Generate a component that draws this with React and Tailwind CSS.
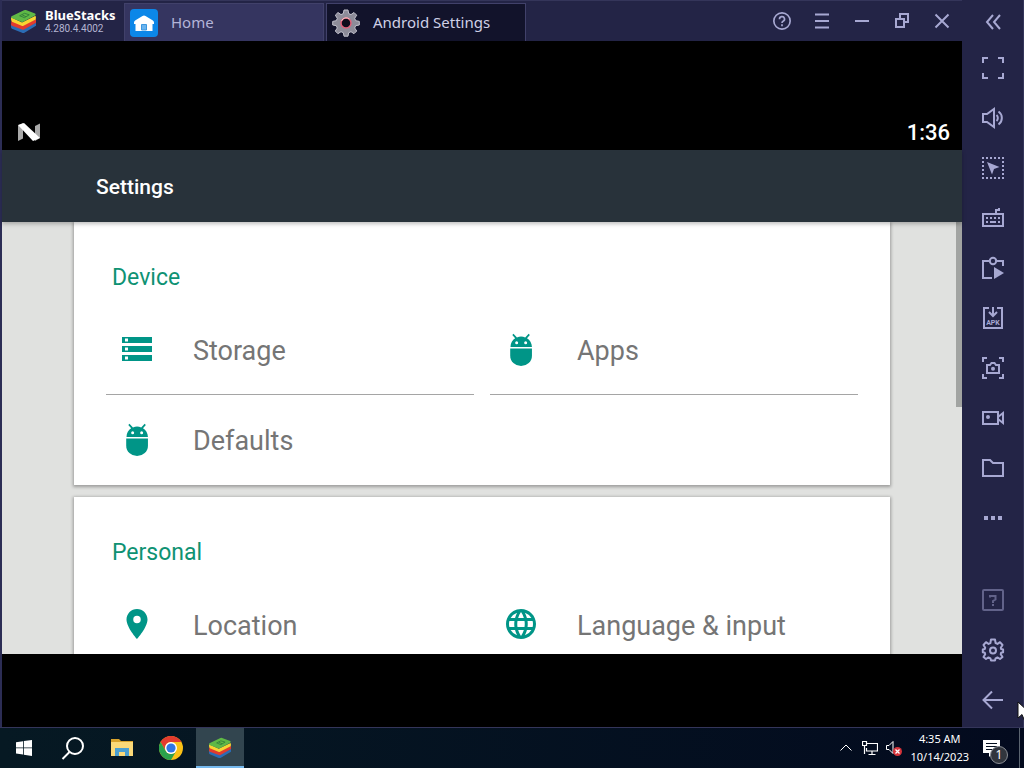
import React, { useState } from 'react'
import { MdStorage, MdLocationOn, MdLanguage } from 'react-icons/md'

const Glyph = ({ children, className = 'h-6 w-6', width = 2 }) => (
  <svg viewBox="0 0 24 24" className={className} fill="none" stroke="currentColor" strokeWidth={width} aria-hidden="true">
    {children}
  </svg>
)

const Logo = ({ className }) => (
  <svg viewBox="0 0 28 26" className={className} aria-hidden="true">
    <path d="M1 15.5 14 20l13-6v3.500L15 24.600q-1.200.6-2.500.1L2 20.500Q1 20 1 18.500Z" fill="#2b6cb4" />
    <path d="M1.500 12 13 17l14-6.500v3.800L14.500 21.300q-1 .4-2 0L2 17.500Q1 17 1 16Z" fill="#e23b2e" />
    <path d="M1 8.500 12.500 14 26.500 7q.8 1.600.2 3.800L14 17.500q-1 .4-2 0L2 13.300Q.8 12.500 1 8.500Z" fill="#f7d532" />
    <path d="M1.500 7.500 14.500 1.200q1-.4 2-.1l9.500 3.700q1.400.8 0 1.900L13.700 13.200q-1 .5-2 0L1.600 9.400Q.5 8.500 1.500 7.500Z" fill="#5fb946" />
    <path d="m10 7 5-2.500 5 1.500-5 3Zm2.500-1 4 2" fill="none" stroke="#33803a" strokeWidth="1" />
  </svg>
)

const HomeIcon = () => (
  <svg viewBox="0 0 28 28" className="h-7 w-7 shrink-0" aria-hidden="true">
    <rect width="28" height="28" rx="4" fill="#0c87e8" />
    <path d="M4 13.500Q4 12 5.500 11.200L12.500 7q1.500-.8 3 0l7 4.200q1.500.8 1.500 2.300V15h-1.500v7h-17v-7H4Z" fill="#fff" />
    <path d="M11.500 21v-5.500h5V21Z" fill="#6bb4ee" stroke="#3c97df" />
  </svg>
)

const GearIcon = () => (
  <svg viewBox="0 0 28 28" className="h-7 w-7 shrink-0" aria-hidden="true">
    <path
      d="M12 1h4l.7 3.600 2.300 1 3-2.100 2.700 2.700-2 3.100 1 2.400L27.300 12.400v3.600l-3.600.7-1 2.300 2 3-2.700 2.700-3-2-2.300 1L16 27.200h-4l-.7-3.500-2.300-1-3.100 2-2.600-2.700 2-3-1-2.300L.7 16v-3.600l3.600-.7 1-2.400-2-3.100L6 3.500l3 2.100 2.300-1Z"
      fill="#8d8c99"
      stroke="#c3c2cd"
      strokeLinejoin="round"
    />
    <circle cx="14" cy="14" r="5" fill="#0d0c1b" stroke="#e2607a" strokeWidth="1.500" />
    <path d="M9.500 12a5 5 0 0 1 8-2" fill="none" stroke="#f7c5c5" />
  </svg>
)

const DroidIcon = () => (
  <svg viewBox="0 1 24 24" className="h-9 w-9" fill="currentColor" aria-hidden="true">
    <path d="M4.800 12.700h14.500V17.500a7.200 6.800 0 0 1-14.500 0Z" />
    <path d="M5 11.700c0-2.700 1.300-4.700 3.100-5.900L6.200 3.600l.8-.7 2.300 2.400a7 7 0 0 1 5.500 0L17.100 2.900l.8.7-1.900 2.200c1.900 1.200 3.200 3.200 3.300 5.900Zm4.100-1.800a1 1 0 1 0 0-2 1 1 0 0 0 0 2Zm6 0a1 1 0 1 0 0-2 1 1 0 0 0 0 2Z" />
  </svg>
)

const windowButtons = [
  {
    label: 'Help',
    icon: (
      <Glyph className="h-5 w-5">
        <circle cx="12" cy="12" r="9.800" />
        <path d="M9 9.800a3 3 0 1 1 4.300 2.600c-.9.500-1.300.9-1.300 2M12 16v2.200" />
      </Glyph>
    ),
  },
  { label: 'Menu', icon: <Glyph><path d="M5 5.500h14M5 12h14M5 18.500h14" /></Glyph> },
  { label: 'Minimize', icon: <Glyph><path d="M5 12h14" /></Glyph> },
  { label: 'Restore', icon: <Glyph><path d="M6 10h8v8H6ZM10 10V5h8v8h-4" /></Glyph> },
  { label: 'Close', icon: <Glyph><path d="m5.500 5.500 13 13m0-13-13 13" /></Glyph> },
]

const tools = [
  { label: 'Full screen', icon: <Glyph><path d="M2 7V2h5M17 2h5v5M22 17v5h-5M7 22H2v-5" /></Glyph> },
  {
    label: 'Volume',
    icon: <Glyph><path d="M2 8h4l7-5v18l-7-5H2ZM15.500 9a4 4 0 0 1 0 6M17.500 5.500a8 8 0 0 1 0 13" /></Glyph>,
  },
  {
    label: 'Lock cursor',
    icon: (
      <Glyph>
        <path d="M1 2h22M1 22h22" strokeDasharray="2 2" />
        <path d="M2 5v16M22 5v16" strokeDasharray="2 2" />
        <path d="m6 6 12.500 5-5.500 2-2 5.500Z" fill="currentColor" stroke="none" />
      </Glyph>
    ),
  },
  {
    label: 'Game controls',
    icon: (
      <Glyph>
        <path d="M2 8h20v12H2ZM15 8V4h3V2" />
        <path d="M5 12h14M5 16h2M17 16h2" strokeDasharray="2 2" />
        <path d="M9 16h6" />
      </Glyph>
    ),
  },
  {
    label: 'Macro recorder',
    icon: (
      <Glyph>
        <path d="M8 5H2v17h9M16 5h6v5" />
        <circle cx="12" cy="5" r="3.200" />
        <path d="M13 11v12l10-6Z" fill="currentColor" stroke="none" />
      </Glyph>
    ),
  },
  {
    label: 'Install APK',
    icon: (
      <Glyph>
        <path d="M8 2H3v20h18V2h-5M12 1v8M8 6l4 4 4-4" />
        <text x="12" y="19" fontSize="7" fontWeight="700" textAnchor="middle" fill="currentColor" stroke="none" fontFamily="Roboto, sans-serif">APK</text>
      </Glyph>
    ),
  },
  {
    label: 'Screenshot',
    icon: (
      <Glyph>
        <path d="M2 6V2h4M18 2h4v4M22 18v4h-4M6 22H2v-4M6 9h3l1.500-2h3L15 9h3v8H6Z" />
        <circle cx="12" cy="12.700" r="2" fill="currentColor" stroke="none" />
      </Glyph>
    ),
  },
  {
    label: 'Record screen',
    icon: (
      <Glyph>
        <path d="M2 6h15v12H2ZM17 11l5-4v10l-5-4" />
        <circle cx="7" cy="11" r="2" fill="currentColor" stroke="none" />
      </Glyph>
    ),
  },
  { label: 'Media folder', icon: <Glyph><path d="M2 4h7l3 3h10v13H2Z" /></Glyph> },
  { label: 'More', icon: <Glyph><path d="M3 12h4M10 12h4M17 12h4" strokeWidth="4" /></Glyph> },
]

const bottomTools = [
  {
    label: 'Guidance',
    dim: true,
    icon: (
      <Glyph>
        <rect x="2" y="2" width="20" height="20" rx="1" />
        <path d="M9 9.500V8h5.500v3.500L12 13v2M12 16v2" />
      </Glyph>
    ),
  },
  {
    label: 'Settings',
    icon: (
      <Glyph>
        <path
          strokeLinejoin="round"
          d="M10 1.500h4l.6 3.500 1.900.9L19 4.200 21.500 7l-1.700 2.700.3 1.300 2 .5v2.800l-2 .5-.4 1.500L21.500 19 19 21l-2.600-1.600-1.800.9L14 22.500h-4l-.6-2.200-1.900-.9L5 21l-2.500-2 1.700-2.700-.4-1.500-2-.5v-2.800l2-.5.4-1.300L2.500 7 5 4.200l2.500 1.700L9.400 5Z"
        />
        <circle cx="12" cy="12.500" r="3" />
      </Glyph>
    ),
  },
  { label: 'Back', icon: <Glyph><path d="M22 12H3M11 3.500 2.500 12l8.500 8.500" /></Glyph> },
]

const sections = [
  {
    title: 'Device',
    items: [
      { name: 'Storage', icon: <MdStorage className="h-9 w-9" /> },
      { name: 'Apps', icon: <DroidIcon /> },
      { name: 'Defaults', icon: <DroidIcon /> },
    ],
  },
  {
    title: 'Personal',
    items: [
      { name: 'Location', icon: <MdLocationOn className="h-9 w-9" /> },
      { name: 'Language & input', icon: <MdLanguage className="h-9 w-9" /> },
    ],
  },
]

const tabs = [
  { name: 'Home', icon: <HomeIcon /> },
  { name: 'Android Settings', icon: <GearIcon /> },
]

function TitleBar() {
  const [active, setActive] = useState('Android Settings')

  return (
    <header className="flex h-[41px] shrink-0 items-stretch border-t border-[#34355a]">
      <div className="flex w-[122px] shrink-0 items-center gap-2 pl-2">
        <Logo className="h-[25px] w-[27px] shrink-0" />
        <div className="font-['Noto_Sans',sans-serif] whitespace-nowrap">
          <p className="text-[13px] leading-4 font-bold text-white">BlueStacks</p>
          <p className="font-['Roboto',sans-serif] text-[10px] leading-3 text-[#b4b5d2]">4.280.4.4002</p>
        </div>
      </div>
      <nav className="flex min-w-0 gap-0.5 pt-0.5">
        {tabs.map((tab) => (
          <button
            key={tab.name}
            onClick={() => setActive(tab.name)}
            className={`flex w-50 items-center gap-[13px] border border-b-0 border-[#41416a] pl-[5px] font-['Noto_Sans',sans-serif] text-[15px] whitespace-nowrap ${
              active === tab.name ? 'bg-[#12132b] text-[#cfd0e6]' : 'bg-[#353560] text-[#b3b4d8]'
            }`}
          >
            {tab.icon}
            {tab.name}
          </button>
        ))}
      </nav>
      <div className="ml-auto flex text-[#a7a8d2]">
        {windowButtons.map((b) => (
          <button key={b.label} aria-label={b.label} className="flex w-10 items-center justify-center">
            {b.icon}
          </button>
        ))}
      </div>
    </header>
  )
}

function SettingsCard({ section }) {
  return (
    <section className="bg-white px-8 shadow-[0_1px_3px_1px_rgba(0,0,0,0.3)]">
      <h2 className="h-[83px] pt-[42px] pl-1.5 text-[23px] leading-7 text-[#0e9273]">{section.title}</h2>
      <div className="grid grid-cols-2 gap-x-4">
        {section.items.map((item, i) => (
          <a
            key={item.name}
            href="#"
            className={`flex h-[90px] items-center gap-[38px] border-b pl-[13px] text-[27px] text-[#757575] ${
              i < 2 ? 'border-[#a5a5a5]' : 'border-transparent'
            }`}
          >
            <span className="pb-0.5 text-[#009587]">{item.icon}</span>
            <span className="pt-1">{item.name}</span>
          </a>
        ))}
      </div>
    </section>
  )
}

function AndroidScreen() {
  return (
    <main className="flex min-h-0 flex-1 flex-col bg-black pt-[73px] pb-[73px] font-['Roboto',sans-serif]">
      <div className="flex h-9 shrink-0 items-center justify-between pr-3 pl-4 text-white">
        <svg viewBox="0 0 22 18" className="h-[18px] w-[22px]" aria-label="Android N">
          <path d="M0 2.500 5 0v15.500L0 18ZM17 3l5-2.500V15l-5 3Z" fill="#a9a9a9" />
          <path d="M0 2 6 0l16 15-7 3Z" fill="#fff" />
        </svg>
        <time className="text-[22px] font-medium">1:36</time>
      </div>
      <div className="relative z-10 flex h-[72px] shrink-0 items-center bg-[#28323a] px-[94px] shadow-[0_2px_4px_rgba(0,0,0,0.25)]">
        <h1 className="pt-1 text-[21px] font-medium text-white">Settings</h1>
      </div>
      <div className="relative min-h-0 flex-1 overflow-hidden bg-[#e0e1df]">
        <div className="flex flex-col gap-3 px-[72px]">
          {sections.map((s) => (
            <SettingsCard key={s.title} section={s} />
          ))}
        </div>
        <div className="absolute top-0 right-0 h-[185px] w-1.5 bg-[#a2a4a2]" />
      </div>
    </main>
  )
}

function ToolButton({ tool }) {
  return (
    <button
      aria-label={tool.label}
      className={`flex h-[50px] w-full items-center justify-center ${tool.dim ? 'text-[#62638a]' : 'text-[#a7a8d2]'}`}
    >
      {tool.icon}
    </button>
  )
}

function SideBar() {
  return (
    <aside className="flex w-[62px] shrink-0 flex-col border-r border-[#34355a] pb-0.5 pl-px">
      <button aria-label="Collapse" className="flex h-[43px] w-full shrink-0 items-center justify-center text-[#a7a8d2]">
        <Glyph><path d="m12 5-6 7 6 7M19 5l-6 7 6 7" /></Glyph>
      </button>
      <div className="flex-1">
        {tools.map((t) => (
          <ToolButton key={t.label} tool={t} />
        ))}
      </div>
      <div>
        {bottomTools.map((t) => (
          <ToolButton key={t.label} tool={t} />
        ))}
      </div>
    </aside>
  )
}

const taskbarApps = [
  {
    label: 'Start',
    icon: (
      <svg viewBox="0 0 16 16" className="h-4 w-4" fill="#fff">
        <path d="M0 2.200 7 1.200v6.300H0ZM7.800 1.100 16 0v7.500H7.800ZM0 8.300h7v6.300l-7-1ZM7.800 8.300H16V16l-8.200-1.200Z" />
      </svg>
    ),
  },
  {
    label: 'Search',
    icon: (
      <svg viewBox="0 0 24 24" className="h-6 w-6" fill="none" stroke="#fff" strokeWidth="2">
        <circle cx="14" cy="10" r="8" />
        <path d="m8.500 16-7 7" />
      </svg>
    ),
  },
  {
    label: 'File Explorer',
    icon: (
      <svg viewBox="0 0 24 20" className="h-5 w-6">
        <path d="M1 1h8l2 2h12v15H1Z" fill="#d9a32c" />
        <path d="M1 4h22v14H1Z" fill="#fbd978" />
        <path d="M5 10h14v8h-4v-4H9v4H5Z" fill="#4b9fd0" />
      </svg>
    ),
  },
  {
    label: 'Chrome',
    icon: (
      <svg viewBox="0 0 24 24" className="h-6 w-6">
        <circle cx="12" cy="12" r="12" fill="#fbc116" />
        <path d="M1.600 6A12 12 0 0 1 22.400 6H12a6 6 0 0 0-5.200 9Z" fill="#e33b2e" />
        <path d="M1.600 6 6.800 15A6 6 0 0 0 17.200 15L12 24A12 12 0 0 1 1.600 6Z" fill="#2ba24c" />
        <circle cx="12" cy="12" r="6" fill="#fff" />
        <circle cx="12" cy="12" r="4.600" fill="#3176e4" />
      </svg>
    ),
  },
  { label: 'BlueStacks', active: true, icon: <Logo className="h-[22px] w-6" /> },
]

function Taskbar() {
  return (
    <footer className="flex h-10 shrink-0 justify-between bg-linear-to-r from-[#061923] to-[#030a1e] font-['Noto_Sans',sans-serif] text-white">
      <div className="flex gap-px">
        {taskbarApps.map((app) => (
          <button
            key={app.label}
            aria-label={app.label}
            className={`flex w-12 items-center justify-center border-y-2 border-t-transparent ${
              app.active ? 'border-b-[#76b9ed] bg-[#32454f]' : 'border-b-transparent'
            }`}
          >
            {app.icon}
          </button>
        ))}
      </div>
      <div className="flex items-center">
        <button aria-label="Show hidden icons" className="px-1.5">
          <Glyph className="h-3 w-3" width={2}><path d="m1 17 11-11 11 11" /></Glyph>
        </button>
        <button aria-label="Network" className="px-1">
          <svg viewBox="0 0 16 16" className="h-4 w-4" fill="none" stroke="#fff" strokeWidth="1.200">
            <path d="M5 3.500h10.500v7.500H4.500V8M10 11v3M6.500 14.500h7M.500 1.500h4v4h-4ZM2.500 5.500v8.500" />
          </svg>
        </button>
        <button aria-label="Volume muted" className="px-1">
          <svg viewBox="0 0 16 16" className="h-4 w-4">
            <path d="M.500 5.500h2.500l4-4v12l-4-4H.500Z" fill="none" stroke="#fff" />
            <circle cx="11.500" cy="11.500" r="4.500" fill="#d6333a" />
            <path d="m9.500 9.500 4 4m0-4-4 4" stroke="#fff" strokeWidth="1.300" />
          </svg>
        </button>
        <time className="px-1 text-center text-[11px] leading-[18px] whitespace-nowrap">
          4:35 AM
          <br />
          10/14/2023
        </time>
        <button aria-label="Notifications" className="relative ml-2.5 h-full w-[37px] border-r border-[#5b6470]">
          <svg viewBox="0 0 18 18" className="h-[18px] w-[18px]">
            <path d="M0 1h17v13H10l-4 4v-4H0Z" fill="#fff" />
            <path d="M3 4.500h11M3 7.500h11M3 10.500h7" stroke="#061020" />
          </svg>
          <span className="absolute top-[18px] left-[7px] flex h-[18px] w-[18px] items-center justify-center rounded-full border border-[#8a8e95] bg-[#31353d] text-xs">
            1
          </span>
        </button>
        <div className="w-1" />
      </div>
    </footer>
  )
}

export default function App() {
  return (
    <div className="relative flex h-screen flex-col overflow-hidden bg-[#232446]">
      <div className="flex min-h-0 flex-1 border-b border-[#34355a]">
        <div className="flex min-w-0 flex-1 flex-col border-l-2 border-[#2c2d55]">
          <TitleBar />
          <AndroidScreen />
        </div>
        <SideBar />
      </div>
      <Taskbar />
      {/* mouse pointer */}
      <svg viewBox="0 0 14 20" className="pointer-events-none absolute top-[701px] -right-[7px] z-20 h-5 w-3.5" aria-hidden="true">
        <path d="M1 1v16l4-3.500 2.500 6 3-1.200L8 12.500h5.500Z" fill="#fff" stroke="#111" />
      </svg>
    </div>
  )
}
